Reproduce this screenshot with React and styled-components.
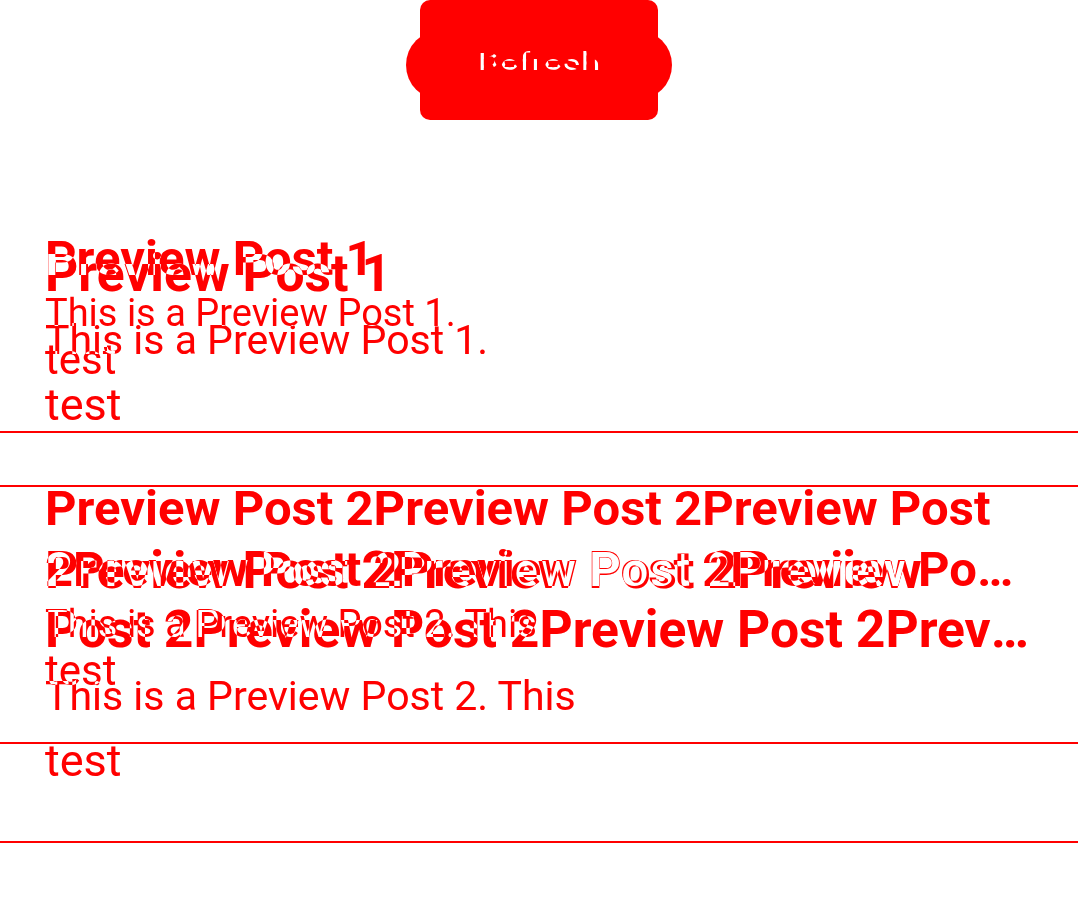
import React from 'react'
import styled, { createGlobalStyle, css } from 'styled-components'

const GlobalStyle = createGlobalStyle`
  html, body {
    margin: 0;
    padding: 0;
    background: #ffffff;
  }
  body {
    font-family: Roboto, "Liberation Sans", sans-serif;
  }
`

const CONTENT_WIDTH = 988

// two renderings of the same feed, stacked in one grid cell
const Stage = styled.div`
  display: grid;
  width: 100%;
`

const Layer = styled.div`
  grid-area: 1 / 1;
  display: flex;
  flex-direction: column;
  min-width: 0;
`

// the second pass punches through the first where both have ink
const ink = css`
  color: ${p => (p.$xor ? '#00ffff' : '#ff0000')};
  ${p => p.$xor && css`mix-blend-mode: difference;`}
`

const Header = styled.header`
  height: ${p => p.$height}px;
  box-sizing: border-box;
  padding-top: ${p => p.$top}px;
  display: flex;
  justify-content: center;
  align-items: flex-start;
`

const RefreshButton = styled.button`
  width: ${p => p.$w}px;
  height: ${p => p.$h}px;
  box-sizing: border-box;
  padding: ${p => (p.$nudge > 0 ? `${p.$nudge * 2}px 0 0` : `0 0 ${-p.$nudge * 2}px`)};
  border: 0;
  border-radius: ${p => p.$radius}px;
  background: #ff0000;
  color: #ffffff;
  font-family: Roboto, "Liberation Sans", sans-serif;
  font-size: 36px;
  font-weight: 400;
  display: flex;
  align-items: center;
  justify-content: center;
  ${p => p.$blend && css`mix-blend-mode: multiply;`}
`

const List = styled.section`
  display: flex;
  flex-direction: column;
`

const Item = styled.article`
  padding: ${p => p.$pt}px 45px ${p => p.$pb}px;
  border-bottom: 2px solid #ff0000;
`

const Title = styled.h2`
  margin: 0;
  font-size: ${p => p.$size}px;
  font-weight: 700;
  line-height: ${p => p.$lh}px;
  ${ink}
`

const TitleLine = styled.span`
  display: block;
  white-space: nowrap;
  overflow: hidden;
  text-overflow: ellipsis;
`

const Body = styled.p`
  margin: ${p => p.$gap}px 0 0;
  font-size: ${p => p.$size}px;
  line-height: ${p => p.$lh}px;
  font-weight: 400;
  ${ink}
`

const Extra = styled.div`
  margin-top: ${p => p.$gap}px;
  font-size: ${p => p.$size}px;
  line-height: ${p => p.$lh}px;
  font-weight: 400;
  ${ink}
`

let measureCtx
const measure = (text, font) => {
  if (!measureCtx) measureCtx = document.createElement('canvas').getContext('2d')
  measureCtx.font = font
  return measureCtx.measureText(text).width
}

// first line wraps on words, the second one runs on and gets the ellipsis
const clampTwoLines = (text, size) => {
  const font = `700 ${size}px Roboto`
  const words = text.split(' ')
  let head = ''
  let i = 0
  for (; i < words.length; i++) {
    const next = head ? `${head} ${words[i]}` : words[i]
    if (measure(next, font) > CONTENT_WIDTH) break
    head = next
  }
  return [head, words.slice(i).join(' ')].filter(Boolean)
}

const posts = [
  { id: 1, title: 'Preview Post 1', body: 'This is a Preview Post 1.', extra: 'test' },
  {
    id: 2,
    title: 'Preview Post 2'.repeat(8),
    body: 'This is a Preview Post 2. '.repeat(3).slice(0, 30),
    extra: 'test',
  },
]

const passes = [
  {
    key: 'a',
    xor: false,
    header: { height: 183, top: 0, w: 238, h: 120, radius: 10, nudge: -2 },
    title: { size: 49, lh: 61 },
    body: { size: 38, lh: 44, gap: 2 },
    extra: { size: 42, lh: 50, gap: 0 },
    pt: 45,
    pb: 46,
  },
  {
    key: 'b',
    xor: true,
    header: { height: 190, top: 30, w: 266, h: 70, radius: 35, nudge: 2 },
    title: { size: 51.6, lh: 59 },
    body: { size: 41, lh: 47, gap: 14 },
    extra: { size: 45, lh: 53, gap: 14 },
    pt: 54,
    pb: 54,
  },
]

const Feed = ({ pass }) => (
  <Layer>
    <Header $height={pass.header.height} $top={pass.header.top}>
      <RefreshButton
        $w={pass.header.w}
        $h={pass.header.h}
        $radius={pass.header.radius}
        $nudge={pass.header.nudge}
        $blend={pass.xor}
      >
        Refresh
      </RefreshButton>
    </Header>
    <List>
      {posts.map(post => (
        <Item key={post.id} $pt={pass.pt} $pb={pass.pb}>
          <Title $size={pass.title.size} $lh={pass.title.lh} $xor={pass.xor}>
            {clampTwoLines(post.title, pass.title.size).map((line, i) => (
              <TitleLine key={i}>{line}</TitleLine>
            ))}
          </Title>
          <Body $size={pass.body.size} $lh={pass.body.lh} $gap={pass.body.gap} $xor={pass.xor}>
            {post.body}
          </Body>
          <Extra $size={pass.extra.size} $lh={pass.extra.lh} $gap={pass.extra.gap} $xor={pass.xor}>
            {post.extra}
          </Extra>
        </Item>
      ))}
    </List>
  </Layer>
)

export default function App() {
  return (
    <>
      <GlobalStyle />
      <Stage>
        {passes.map(pass => (
          <Feed key={pass.key} pass={pass} />
        ))}
      </Stage>
    </>
  )
}
